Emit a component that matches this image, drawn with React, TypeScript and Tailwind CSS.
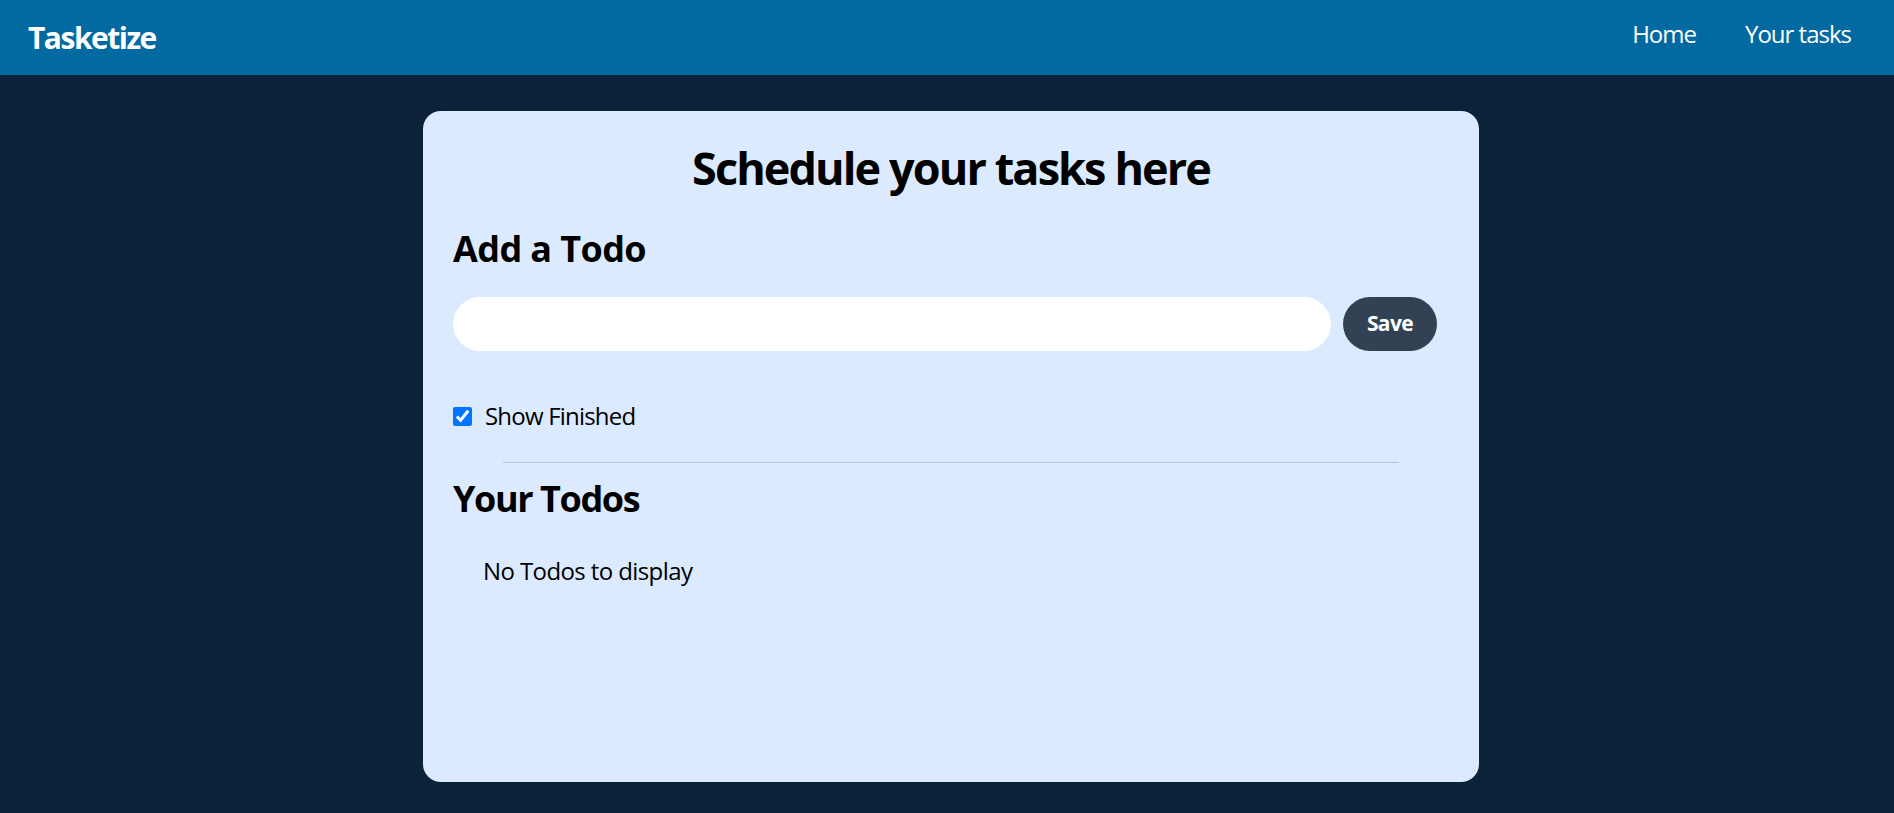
import { useState } from "react";

export default function App() {
  const [todo, setTodo] = useState("");
  const [showFinished, setShowFinished] = useState(true);

  return (
    <div className="min-h-screen bg-[#0b2239] text-black font-['Open_Sans',sans-serif]">
      <nav className="h-[75px] bg-[#0369a1] text-white flex items-center justify-between pl-[28px] pr-[43px]">
        <span className="text-[30px] leading-[45px] font-bold tracking-[-1.5px]">Tasketize</span>
        <ul className="flex gap-[49px] text-[24px] leading-[36px] pb-[7px] tracking-[-1px]">
          <li className="cursor-pointer">Home</li>
          <li className="cursor-pointer">Your tasks</li>
        </ul>
      </nav>

      <div className="flex justify-center pl-[8px] pt-[36px]">
        <div className="w-[1056px] h-[671px] rounded-[18px] bg-[#dbeafe] p-[30px]">
          <h1 className="text-center text-[45px] leading-[54px] font-bold tracking-[-1.9px]">Schedule your tasks here</h1>

          <h2 className="mt-[30px] text-[36px] leading-[48px] font-bold tracking-[-0.6px]">Add a Todo</h2>
          <div className="mt-[24px] flex gap-[12px]">
            <input
              type="text"
              value={todo}
              onChange={(e) => setTodo(e.target.value)}
              className="w-[878px] h-[54px] rounded-full bg-white px-[24px] text-[24px] outline-none"
            />
            <button className="w-[94px] h-[54px] rounded-full bg-[#334155] text-white text-[21px] font-bold tracking-[-0.6px]">
              Save
            </button>
          </div>

          <label className="mt-[47px] flex items-center gap-[13px] text-[24px] leading-[36px] tracking-[-0.8px]">
            <input
              type="checkbox"
              checked={showFinished}
              onChange={() => setShowFinished(!showFinished)}
              className="w-[19px] h-[19px] m-0"
            />
            Show Finished
          </label>

          <div className="mt-[28px] w-[90%] mx-auto border-t border-[#b6c5d9]" />

          <h2 className="mt-[12px] text-[36px] leading-[48px] font-bold tracking-[-1.4px]">Your Todos</h2>
          <div className="mt-[30px] ml-[30px] text-[24px] leading-[36px] tracking-[-0.6px]">No Todos to display</div>
        </div>
      </div>
    </div>
  );
}
